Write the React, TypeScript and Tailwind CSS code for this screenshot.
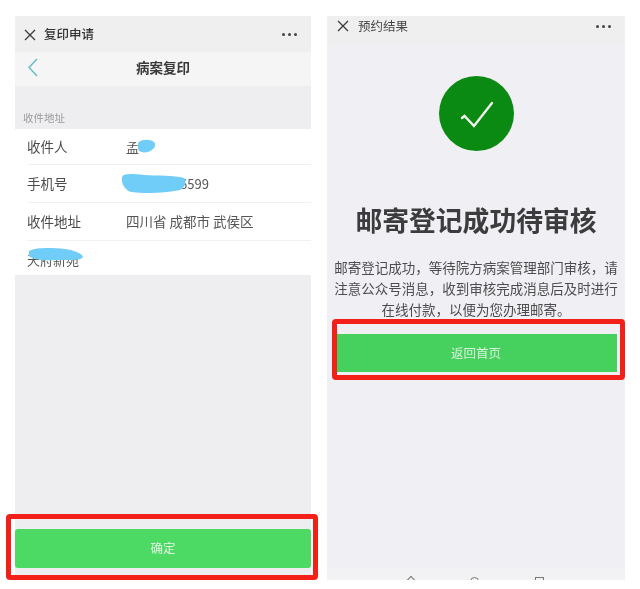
const cjk = "font-['Noto_Sans_CJK_SC','Noto_Sans',sans-serif]";

function CloseIcon() {
  return (
    <svg width="12" height="12" viewBox="0 0 12 12" fill="none" stroke="#3a3a3a" strokeWidth="1.3">
      <path d="M1 1 L11 11 M11 1 L1 11" />
    </svg>
  );
}

function Dots() {
  return (
    <div className="flex items-center gap-[3px]">
      <span className="w-[3px] h-[3px] rounded-full bg-[#444]" />
      <span className="w-[3px] h-[3px] rounded-full bg-[#444]" />
      <span className="w-[3px] h-[3px] rounded-full bg-[#444]" />
    </div>
  );
}

function Scribble({ d, w, h }: { d: string; w: number; h: number }) {
  return (
    <svg width={w} height={h} viewBox={`0 0 ${w} ${h}`} className="absolute left-0 top-0">
      <path d={d} fill="#6fcdf8" />
    </svg>
  );
}

function Row({ label, children, className }: { label?: string; children?: React.ReactNode; className: string }) {
  return (
    <div className={`flex items-center ml-3 ${className}`}>
      {label && <span className="w-[99px] text-[13.5px] text-[#4a4a4a]">{label}</span>}
      {children}
    </div>
  );
}

function LeftPhone() {
  return (
    <div className="relative w-[296px] h-[563px] flex flex-col bg-[#eeedf0]">
      {/* Title bar */}
      <div className="h-9 shrink-0 bg-[#efefef] flex items-center pl-[9px] pr-[14px] pt-[1px]">
        <CloseIcon />
        <span className="ml-2 text-[12.5px] font-medium text-[#333]">复印申请</span>
        <div className="ml-auto"><Dots /></div>
      </div>

      {/* Nav */}
      <div className="relative h-[34px] shrink-0 bg-[#f5f5f5] flex items-center justify-center pb-[3px]">
        <svg width="12" height="22" viewBox="0 0 12 22" fill="none" stroke="#62bcc4" strokeWidth="1.4" className="absolute left-[12px] top-[5px]">
          <path d="M10 2 L2 10.5 L10 19" />
        </svg>
        <span className="text-[13.5px] font-bold text-[#3a3a3a]">病案复印</span>
      </div>

      {/* Section label */}
      <div className="h-[43px] shrink-0 flex items-end px-2 pb-[3px]">
        <span className="text-[10.5px] text-[#9a9a9a]">收件地址</span>
      </div>

      {/* Address form */}
      <div className="h-[146px] shrink-0 bg-white flex flex-col">
        <Row label="收件人" className="h-[36px] border-b border-[#f1f1f1]">
          <div className="relative w-[34px] h-[18px]">
            <span className="absolute left-0 top-0 text-[13px] leading-[18px] text-[#555]">孟</span>
            <Scribble w={34} h={18} d="M12 5 C15 1 24 1 28 4 C31 7 28 12 22 14 C17 15 13 14 12 11 Z" />
          </div>
        </Row>
        <Row label="手机号" className="h-[38px] border-b border-[#f1f1f1]">
          <div className="relative w-[90px] h-[22px] -ml-[4px]">
            <span className="absolute left-[58px] top-[2px] text-[13px] leading-[18px] text-[#555]">6599</span>
            <Scribble w={65} h={22} d="M0 4 C2 0 10 1 22 2 C36 3 52 2 62 5 C65 8 63 15 58 17 C44 20 24 21 10 19 C3 18 -1 10 0 4 Z" />
          </div>
        </Row>
        <Row label="收件地址" className="h-[38px] border-b border-[#f1f1f1]">
          <span className="text-[13.5px] text-[#555] whitespace-pre">四川省 成都市 武侯区</span>
        </Row>
        <Row className="h-[34px]">
          <div className="relative w-[58px] h-[20px]">
            <span className="absolute left-0 top-[3px] text-[13px] leading-[18px] text-[#555]">天府新苑</span>
            <Scribble w={58} h={16} d="M2 3 C10 -1 26 0 38 1 C46 2 55 5 56 9 C54 13 42 12 30 12 C18 13 6 12 2 8 Z" />
          </div>
        </Row>
      </div>

      {/* Confirm button */}
      <div className="mt-auto mb-[11px]">
        <button className="w-full h-[39px] rounded-[3px] bg-[#4cd964] text-[12.5px] text-[#e3f7e6]">确定</button>
      </div>

      {/* Red annotation */}
      <div className="absolute -left-[9px] -right-[7px] bottom-[-1px] h-[66px] rounded-[4px] border-[5px] border-[#f3201a]" />
    </div>
  );
}

function RightPhone() {
  return (
    <div className="relative w-[298px] h-[564px] flex flex-col items-center bg-[#f0eff3]">
      {/* Title bar */}
      <div className="w-full h-[29px] shrink-0 bg-[#efefef]">
        <div className="h-5 flex items-center pl-[10px] pr-[14px]">
          <CloseIcon />
          <span className="ml-[9px] text-[12.5px] text-[#444]">预约结果</span>
          <div className="ml-auto"><Dots /></div>
        </div>
      </div>

      {/* Success icon */}
      <div className="mt-[31px] w-[75px] h-[75px] shrink-0 rounded-full bg-[#0a8a12] flex items-center justify-center">
        <svg width="36" height="30" viewBox="0 0 36 30" fill="none" stroke="#f1f5ee" strokeWidth="2.4" strokeLinecap="round">
          <path d="M4 19 L6.5 17 L16 27 L34 4" />
        </svg>
      </div>

      <h1 className="mt-[51px] text-[26.8px] leading-[36px] font-bold text-[#3c3c3e]">邮寄登记成功待审核</h1>

      <p className="mt-[19px] w-[288px] text-center text-[13.5px] leading-[21px] text-[#4c4c4e]">
        邮寄登记成功，等待院方病案管理部门审核，请注意公众号消息，收到审核完成消息后及时进行在线付款，以便为您办理邮寄。
      </p>

      {/* Home button */}
      <button className="mt-[14px] w-[282px] h-[38px] shrink-0 bg-[#46d05e] text-[12.5px] text-[#d9f3dd]">返回首页</button>

      {/* Bottom system bar, cut off by the crop */}
      <div className="mt-auto w-full h-[13px] bg-[#f2f1f3] overflow-hidden flex justify-center gap-[56px] pt-[10px]">
        <span className="w-[6px] h-[6px] rotate-45 border-l border-t border-[#777]" />
        <span className="w-[9px] h-[9px] rounded-full border border-[#777]" />
        <span className="w-[9px] h-[9px] border border-[#777]" />
      </div>

      {/* Red annotation */}
      <div className="absolute left-[5px] right-0 top-[303px] h-[61px] rounded-[4px] border-[5px] border-[#f3201a]" />
    </div>
  );
}

export default function App() {
  return (
    <div className={`w-[640px] h-[589px] bg-white pt-4 pl-[15px] flex gap-4 overflow-hidden blur-[0.4px] ${cjk}`}>
      <LeftPhone />
      <RightPhone />
    </div>
  );
}
